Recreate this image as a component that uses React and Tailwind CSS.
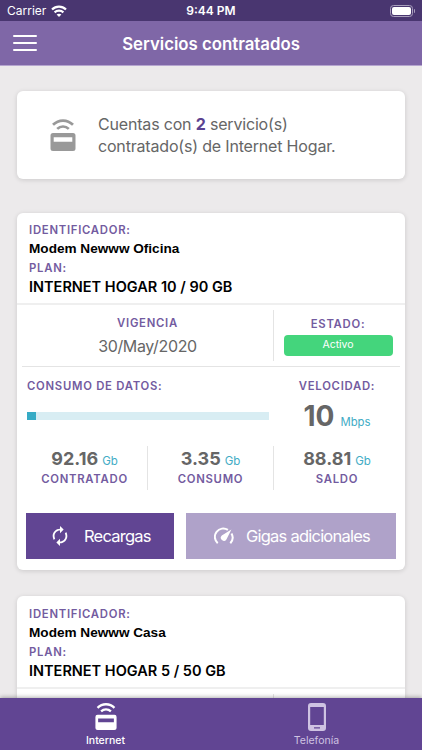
import React from 'react';
import { MdAutorenew } from 'react-icons/md';

const services = [
  {
    id: 'Modem Newww Oficina',
    plan: 'INTERNET HOGAR 10 / 90 GB',
    expires: '30/May/2020',
    status: 'Activo',
    speed: 10,
    total: '92.16',
    used: '3.35',
    left: '88.81',
  },
  {
    id: 'Modem Newww Casa',
    plan: 'INTERNET HOGAR 5 / 50 GB',
  },
];

const ModemIcon = ({ className }) => (
  <svg viewBox="0 0 26 34" className={className} fill="none">
    <path d="M3 6.8C8.6 1.1 17.4 1.1 23 6.8" stroke="currentColor" strokeWidth="2.7" />
    <path d="M7.2 10.9c3.3-3.2 8.3-3.2 11.6 0" stroke="currentColor" strokeWidth="2.7" />
    <path
      fillRule="evenodd"
      fill="currentColor"
      d="M3 15h20a2.5 2.5 0 0 1 2.5 2.5v13A2.5 2.5 0 0 1 23 33H3a2.5 2.5 0 0 1-2.5-2.5v-13A2.5 2.5 0 0 1 3 15zm.7 4.3v4.5h18.6v-4.5z"
    />
  </svg>
);

const PhoneIcon = ({ className }) => (
  <svg viewBox="0 0 18 28" className={className} fill="currentColor">
    <path
      fillRule="evenodd"
      d="M3 0h12a3 3 0 0 1 3 3v22a3 3 0 0 1-3 3H3a3 3 0 0 1-3-3V3a3 3 0 0 1 3-3zM2.2 4v18h13.6V4zM6 24.3v1.2h6v-1.2z"
    />
  </svg>
);

const GaugeIcon = () => (
  <svg viewBox="0 0 20 18" className="h-[18px] w-5" fill="none" stroke="currentColor" strokeWidth="2">
    <path d="M3.7 16.2A8.4 8.4 0 0 1 13.9 2.9" />
    <path d="M17.5 6.4a8.4 8.4 0 0 1-1.2 9.8" />
    <path d="M17.4 2.4 7.8 8.6a3 3 0 1 0 4.6 3.8z" fill="currentColor" stroke="none" />
  </svg>
);

const WifiIcon = () => (
  <svg viewBox="0 0 16 12" className="ml-[5px] h-[12px] w-[16px]" fill="none" stroke="white" strokeWidth="2.2">
    <path d="M1 4.5c4-3.9 10-3.9 14 0" />
    <path d="M3.6 7.4c2.5-2.4 6.3-2.4 8.8 0" />
    <path d="M8 12 5.6 9.6c1.3-1.2 3.5-1.2 4.8 0z" fill="white" stroke="none" />
  </svg>
);

const Label = ({ children }) => (
  <div className="text-[11.3px] leading-4 font-semibold tracking-[0.75px] whitespace-nowrap text-[#735ba0]">
    {children}
  </div>
);

const Amount = ({ value, label }) => (
  <div className="flex h-[44px] flex-col items-center border-r border-[#e4e4e4] pt-px last:border-r-0">
    <div className="flex h-6 items-baseline text-[18px] leading-6 font-bold text-[#666]">
      {value}
      <span className="ml-[4px] text-[11.5px] font-normal text-[#42acc5]">Gb</span>
    </div>
    <Label>{label}</Label>
  </div>
);

const CardHeader = ({ service }) => (
  <div className="h-[92px] border-b-2 border-[#efefef] pt-[9px] pl-3">
    <Label>IDENTIFICADOR:</Label>
    <div className="h-[22px] font-['Liberation_Sans',sans-serif] text-[13.6px] leading-[21px] font-bold text-black">
      {service.id}
    </div>
    <Label>PLAN:</Label>
    <div className="text-[14.5px] leading-[21px] font-semibold text-black">{service.plan}</div>
  </div>
);

const ServiceCard = ({ service }) => {
  const percent = (parseFloat(service.used) / parseFloat(service.total)) * 100;

  return (
    <div className="h-[357px] shrink-0 rounded-md bg-white shadow-[0_1px_5px_rgba(0,0,0,0.14)]">
      <CardHeader service={service} />

      <div className="px-[5px]">
        <div className="flex h-[62px] border-b border-[#e4e4e4] pt-[5px]">
          <div className="flex h-[51px] w-[252px] flex-col items-center border-r border-[#e4e4e4] pt-[5px]">
            <Label>VIGENCIA</Label>
            <div className="mt-[3px] text-[16px] leading-6 tracking-[-0.35px] text-[#666]">{service.expires}</div>
          </div>
          <div className="flex flex-1 flex-col items-center pt-[6px] pl-[2px]">
            <Label>ESTADO:</Label>
            <div className="mt-[3px] h-[21px] w-[109px] rounded-[4px] bg-[#44d57c] text-center text-[10.5px] leading-5 text-white">
              {service.status}
            </div>
          </div>
        </div>

        <div className="flex h-[79px] pt-[11px]">
          <div className="w-[252px] pl-[5px]">
            <Label>CONSUMO DE DATOS:</Label>
            <div className="mt-[18px] h-2 w-[242px] bg-[#d8edf3]">
              <div className="h-full bg-[#36abc5]" style={{ width: `${percent}%` }}></div>
            </div>
          </div>
          <div className="flex flex-1 flex-col items-center">
            <Label>VELOCIDAD:</Label>
            <div className="flex items-baseline text-[28px] leading-[45px] font-bold text-[#666]">
              {service.speed}
              <span className="ml-[6px] text-[11.3px] font-normal text-[#42acc5]">Mbps</span>
            </div>
          </div>
        </div>

        <div className="grid grid-cols-3">
          <Amount value={service.total} label="CONTRATADO" />
          <Amount value={service.used} label="CONSUMO" />
          <Amount value={service.left} label="SALDO" />
        </div>
      </div>

      <div className="mt-[23px] flex gap-3 px-[9px] text-[16.5px] tracking-[-0.77px] text-white">
        <button className="flex h-[46px] w-[148px] items-center bg-[#614593] pl-[23px]">
          <MdAutorenew size={22} />
          <span className="ml-[13px]">Recargas</span>
        </button>
        <button className="flex h-[46px] flex-1 items-center bg-[#afa2c9] pl-[28px]">
          <GaugeIcon />
          <span className="ml-[12px] whitespace-nowrap">Gigas adicionales</span>
        </button>
      </div>
    </div>
  );
};

export default function App() {
  return (
    <div className="flex h-[750px] w-[422px] flex-col overflow-hidden bg-[#eceaeb] font-['Inter',sans-serif]">
      <div className="grid h-[21px] shrink-0 grid-cols-3 items-center bg-[#493670] px-[7px] text-[12px] text-white">
        <div className="flex items-center">
          Carrier
          <WifiIcon />
        </div>
        <div className="text-center font-semibold">9:44 PM</div>
        <div className="flex items-center justify-end">
          <div className="h-[12px] w-[23px] rounded-[3.5px] border border-[#a99fbd] p-px">
            <div className="h-full rounded-[2px] bg-white"></div>
          </div>
          <div className="ml-px h-1 w-px rounded-r bg-[#a99fbd]"></div>
        </div>
      </div>

      <header className="grid h-[45px] shrink-0 grid-cols-[60px_1fr_60px] items-center border-b border-[#b5a5cf] bg-[#7f67a7]">
        <div className="ml-[13px] flex w-6 flex-col gap-[5px]">
          <div className="h-[2px] rounded bg-white"></div>
          <div className="h-[2px] rounded bg-white"></div>
          <div className="h-[2px] rounded bg-white"></div>
        </div>
        <h1 className="pt-[2px] text-center text-[16.8px] leading-6 font-semibold text-white">Servicios contratados</h1>
      </header>

      <main className="flex min-h-0 flex-1 flex-col pt-[25px] pr-[17px] pl-[17px]">
        <div className="mb-[34px] flex h-[88px] shrink-0 items-center rounded-md bg-white pl-[33px] shadow-[0_1px_5px_rgba(0,0,0,0.14)]">
          <ModemIcon className="h-[34px] w-[26px] text-[#999]" />
          <p className="ml-[22px] text-[16px] leading-[22px] tracking-[-0.18px] text-[#666]">
            Cuentas con <b className="text-[#5b4290]">2</b> servicio(s)
            <br />
            contratado(s) de Internet Hogar.
          </p>
        </div>
        <ServiceCard service={services[0]} />
        <div className="mt-[26px] flex min-h-0 flex-1 flex-col rounded-t-md bg-white pt-px shadow-[0_1px_5px_rgba(0,0,0,0.14)]">
          <CardHeader service={services[1]} />
          <div className="ml-[5px] w-[252px] flex-1 pt-[5px]">
            <div className="h-full border-r border-[#e4e4e4]"></div>
          </div>
        </div>
      </main>

      <nav className="z-10 grid h-[52px] shrink-0 grid-cols-2 bg-[#614593] text-[10.5px] leading-3 text-white shadow-[0_-1px_4px_rgba(0,0,0,0.3)]">
        <div className="flex flex-col items-center pt-1">
          <ModemIcon className="h-[29px] w-[22px]" />
          <span className="mt-[4px] font-medium">Internet</span>
        </div>
        <div className="flex flex-col items-center pt-[5px] text-[#cfc3e2]">
          <PhoneIcon className="h-[28px] w-[18px]" />
          <span className="mt-[4px]">Telefonía</span>
        </div>
      </nav>
    </div>
  );
}
